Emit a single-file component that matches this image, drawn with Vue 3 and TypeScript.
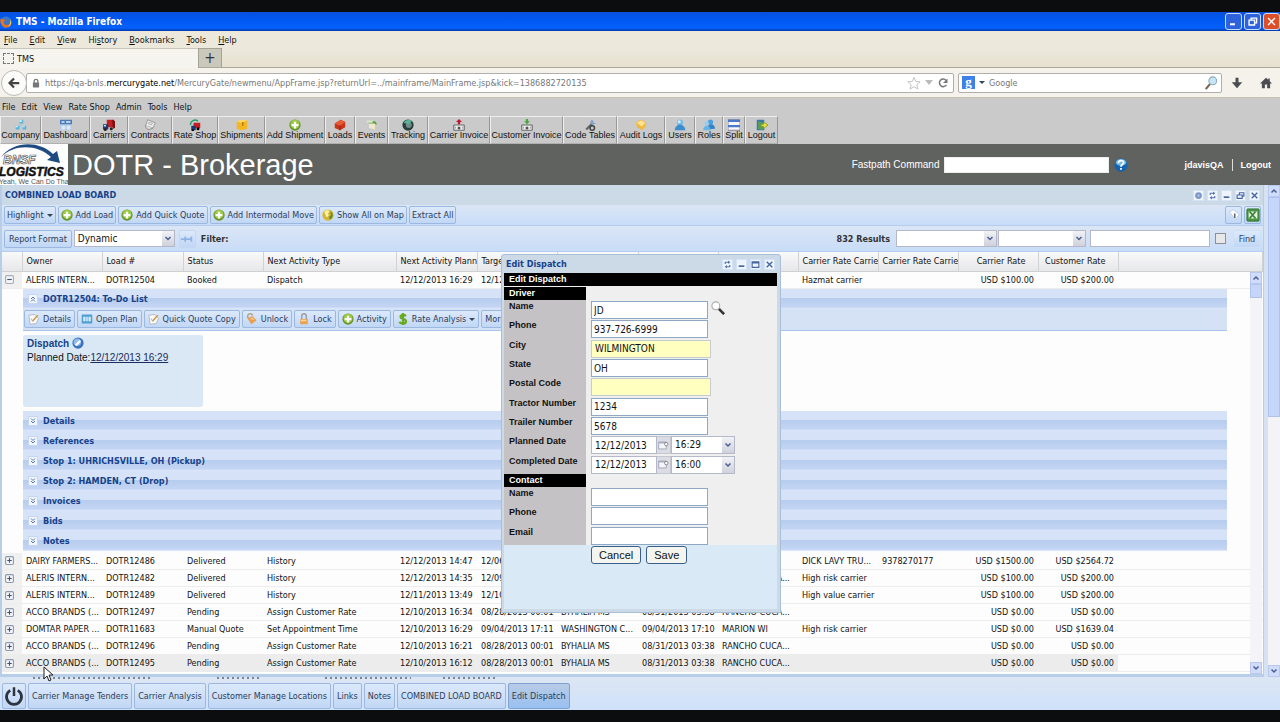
<script setup lang="ts">
import { ref } from 'vue'

type Row = string[]

const icons: Record<string, string> = {
  firefox: '<circle cx="8" cy="7" r="6.500" fill="#3f76c4"/><path d="M1 3C-1 8 2 15 8 15.500c5 0 8-4 7-9-1 3-2 4-4 5-3 1-6 0-6-3 0-2 1-2 2-3C5 4 3 5 1 3z" fill="#e8731d"/><path d="M14 4c2 4 1 9-3 11 2-3 3-7 3-11z" fill="#f9d54a"/>',
  lock: '<rect x="3" y="7" width="10" height="8" rx="1" fill="#777"/><path d="M5 8V5a3 3 0 0 1 6 0v3" fill="none" stroke="#777" stroke-width="2"/>',
  back: '<path d="M8 2 2 8l6 6M2.500 8H15" fill="none" stroke="#444" stroke-width="3"/>',
  star: '<path d="m8 1.500 2 4.700 5 .4-3.800 3.300 1.200 5L8 12.200l-4.400 2.700 1.200-5L1 6.600l5-.4z" fill="#fff" stroke="#bbb"/>',
  reload: '<path d="M12.500 10.500A5 5 0 1 1 12 4.500" fill="none" stroke="#777" stroke-width="2"/><path d="M14 2v6H8z" fill="#777"/>',
  glass: '<path d="m2 15 5-6" stroke="#7d6658" stroke-width="2.500"/><circle cx="10" cy="5.500" r="4.500" fill="#c5e6f7" stroke="#8fa9b8" stroke-width="1.200"/>',
  find: '<path d="m9 9 6 6" stroke="#333" stroke-width="3"/><circle cx="5.500" cy="5.500" r="4.500" fill="#fff" stroke="#aaa" stroke-width="1.200"/>',
  down: '<path d="M6 1h4v6h5l-7 8-7-8h5z" fill="#4a4c50"/>',
  home: '<path d="M8 1 0 8.500h2.500V15h4v-5h3v5h4V8.500H16L13 5.600V2h-2v1.800z" fill="#4a4c50"/>',
  company: '<path d="M8 5v4M3 12l5-4 5 4" stroke="#a8c4c8" fill="none"/><path d="M6 1h5v5H6zM1 9h5v5H1zM10 9h5v5h-5z" fill="#58b4dc"/><path d="M6 1h3v3H6zM1 9h3v2H1zM10 9h3v2h-3z" fill="#bff0f8"/>',
  dashboard: '<path d="M0 1h16v14H0z" fill="#b5cbe3"/><path d="M0 1h16v6H0z" fill="#4b7cb8"/><path d="M2 3h4v2H2zM8 3h6v2H8zM2 9h5v5H2zM9 9h5v5H9z" fill="#dceaf8"/>',
  truck: '<path d="M5 1h10v10H5z" fill="#c51e22"/><path d="m12 1 4 2v9l-3 1z" fill="#7d1013"/><path d="M0 7h7v7H0z" fill="#1f386f"/><path d="M1 8h3v2H1z" fill="#bfe0ff"/><circle cx="3" cy="14" r="2" fill="#222"/><circle cx="11" cy="13" r="2" fill="#222"/>',
  contract: '<path d="m5 1 10 4-3 7L2 9z" fill="#eee" stroke="#888"/><path d="m6 4 6 2M5 6l6 2" stroke="#999"/><path d="M2 9c0 3 2 5 5 5l5-2" fill="#ddd" stroke="#777"/>',
  rate: '<path d="M2 8a6 6 0 0 1 10-5" fill="none" stroke="#23a269" stroke-width="2"/><path d="M6 5h9v7H6z" fill="#c51e22"/><path d="M3 9h6v6H3z" fill="#1f386f"/><circle cx="5" cy="15" r="1.500"/><circle cx="12" cy="13" r="2"/>',
  box: '<path d="m1 3 6 1 8-2v11l-8 2-6-2z" fill="#f4b71f"/><path d="m1 3 7-2 7 1-8 3z" fill="#ffd95e"/><path d="M8 4h2v5H8z" fill="#b7771a"/>',
  add: '<circle cx="8" cy="8" r="7.500" fill="#69942a"/><circle cx="8" cy="7" r="6" fill="#9ccb45"/><path d="M8 3.500v9M3.500 8h9" stroke="#fff" stroke-width="3"/>',
  loads: '<path d="m1 6 8-5 6 3v7l-7 4-7-3z" fill="#c83519"/><path d="m1 6 8-5 6 3-7 5z" fill="#e75b35"/><path d="M8 9v6" stroke="#7d1809"/>',
  events: '<path d="M2 3h10l3 4H5z" fill="#5a9b43"/><path d="M4 6h8v8l-8-2z" fill="#eee9c9"/><path d="M1 2h8v3H1z" fill="#d6e8c3"/>',
  tracking: '<circle cx="8" cy="8" r="7.500" fill="#263f3d"/><circle cx="9" cy="8" r="4" fill="#738b88"/><path d="M2 5a7 7 0 0 1 11-2L9 7z" fill="#59b395"/>',
  invoiceUp: '<path d="M1 8h14v7H1z" fill="#eee" stroke="#444"/><path d="M8 7V3" stroke="#c11530" stroke-width="3"/><path d="m4 4 4-4 4 4z" fill="#c11530"/><circle cx="8" cy="12" r="2" fill="#555"/><path d="M3 10v3M13 10v3" stroke="#777"/>',
  invoiceDown: '<path d="M1 8h14v7H1z" fill="#eee" stroke="#444"/><path d="M8 0v4" stroke="#47a83a" stroke-width="3"/><path d="m4 3 4 4 4-4z" fill="#47a83a"/><circle cx="8" cy="12" r="2" fill="#555"/><path d="M3 10v3M13 10v3" stroke="#777"/>',
  code: '<path d="m3 14 8-8" stroke="#666" stroke-width="3"/><path d="M10 1 8 5l3 3 5-2-3-1-1-3z" fill="#84a3c9"/><circle cx="11" cy="12" r="3" fill="none" stroke="#444" stroke-width="2"/>',
  audit: '<path d="m1 5 6-4 8 3-1 6-5 5-6-4z" fill="#f0b83d"/><path d="m2 5 6-3 6 3-5 5z" fill="#ffe391"/>',
  user: '<circle cx="8" cy="4.500" r="4" fill="#70b9ea"/><path d="M1 15c0-10 14-10 14 0z" fill="#3d8ccd"/><circle cx="7" cy="3.500" r="2" fill="#d5efff"/>',
  roles: '<circle cx="10" cy="4" r="3.500" fill="#4c9ede"/><path d="M5 14c0-9 11-9 11-1z" fill="#3584c6"/><circle cx="5" cy="6" r="3" fill="#93cdf2"/><path d="M0 15c0-8 10-8 10 0z" fill="#69b4e7"/>',
  split: '<path d="M0 1h16v14H0z" fill="#f7f7f7" stroke="#668"/><path d="M0 1h16v3H0zM0 8h16v3H0z" fill="#4a79c9"/>',
  logout: '<path d="M1 1h10v14H1z" fill="#3c79a9"/><path d="m3 3 6 2v10l-6-2z" fill="#5aa14b"/><path d="m10 4 6 4-6 5v-3H7V7h3z" fill="#e4e541" stroke="#8a8e26"/>',
  help: '<circle cx="8" cy="8" r="7.500" fill="#1662ad"/><ellipse cx="8" cy="5" rx="6" ry="4" fill="#70b7e8"/><path d="M5 6c0-4 6-4 6-1 0 2-3 2-3 5M8 11.500v2" fill="none" stroke="#fff" stroke-width="2"/>',
  globe: '<circle cx="8" cy="8" r="7.500" fill="#d6b530"/><path d="M3 4c2-3 6-3 7-1L8 6l1 3-3 2z" fill="#fff4a0"/><path d="M11 3c4 2 5 8 0 11l-2-3 3-3z" fill="#5c8d39"/>',
  note: '<path d="m1 3 8-1 5 5-3 7-8 1z" fill="#fafafa" stroke="#aab"/><path d="m6 11 7-8" stroke="#d09948" stroke-width="2"/><path d="m4 7 2 4" stroke="#9aa"/>',
  plan: '<rect x="1" y="2" width="14" height="12" fill="#4f9fd3"/><path d="M3 5h3v6H3zM7 5h2v6H7zM10 5h3v6h-3z" fill="#d8f1ff"/>',
  unlock: '<path d="m2 7 7-3 5 6-7 5z" fill="#e79e4d"/><path d="M3 7C0 2 6-1 9 3" fill="none" stroke="#b1a38c" stroke-width="2"/><path d="m5 8 4-2 2 3z" fill="#ffd493"/>',
  padlock: '<path d="M3 8h10v7H3z" fill="#e8a14f"/><path d="M5 8V4a3 3 0 0 1 6 0v4" fill="none" stroke="#9b9fa8" stroke-width="2"/><path d="M4 9h7v2H4z" fill="#ffd79b"/>',
  dollar: '<path d="M12 4C8 1 4 3 5 6s7 1 7 5-6 4-9 1M8 0v16" fill="none" stroke="#69a91c" stroke-width="3"/>',
  edit: '<circle cx="8" cy="8" r="7.500" fill="#3b73bd"/><circle cx="7" cy="7" r="5" fill="#91bbed"/><path d="m5 11 6-6" stroke="#fff" stroke-width="3"/>',
  tag: '<path d="m2 4 5-3 8 6-5 7z" fill="#fff" stroke="#b9c4d5"/><path d="M9 6v6" stroke="#59657a" stroke-width="2"/>',
  excel: '<rect x="1" y="1" width="14" height="14" rx="1" fill="#4a9444" stroke="#2f7434"/><path d="M3 4h10v8H3z" fill="#e5f4de"/><path d="m4 4 7 8M11 4l-7 8" stroke="#398438" stroke-width="2"/>',
  pin: '<path d="M1 8h5M6 5v6M6 8h7M13 5v6" stroke="#8fb2e4" stroke-width="2"/>',
  gear: '<circle cx="8" cy="8" r="6" fill="#7f98c5"/><circle cx="8" cy="8" r="2" fill="#b9c9e6"/>',
  refresh: '<path d="M4 7V4h7M12 9v3H5" fill="none" stroke="#5572ab" stroke-width="2"/><path d="m9 1 4 3-4 3zM7 9l-4 3 4 3z" fill="#5572ab"/>',
  min: '<path d="M3 11h10" stroke="#48659f" stroke-width="3"/>',
  restore: '<path d="M6 7V3h8v6h-3M2 7h9v6H2z" fill="none" stroke="#48659f" stroke-width="2"/>',
  max: '<path d="M2 3h12v10H2zM2 5h12" fill="none" stroke="#48659f" stroke-width="2"/>',
  close: '<path d="m3 3 10 10M13 3 3 13" stroke="#48659f" stroke-width="2.500"/>',
  chevUp: '<path d="m4 8 4-4 4 4M4 13l4-4 4 4" fill="none" stroke="#5878a8" stroke-width="2"/>',
  chevDown: '<path d="m4 3 4 4 4-4M4 8l4 4 4-4" fill="none" stroke="#5878a8" stroke-width="2"/>',
  plus: '<rect x="1" y="1" width="14" height="14" rx="2" fill="#f3f5f8" stroke="#8c9bb0" stroke-width="2"/><path d="M8 4v8M4 8h8" stroke="#43546d" stroke-width="2"/>',
  minus: '<rect x="1" y="1" width="14" height="14" rx="2" fill="#f3f5f8" stroke="#a5aebb" stroke-width="2"/><path d="M4 8h8" stroke="#43546d" stroke-width="2"/>',
  up: '<path d="m3 11 5-5 5 5" fill="none" stroke="#4a5e93" stroke-width="3"/>',
  arrow: '<path d="m3 5 5 5 5-5" fill="none" stroke="#4a5e93" stroke-width="3"/>',
  calendar: '<path d="M1 3h11v10H1z" fill="#f5f5fa" stroke="#8b91a5"/><path d="M1 3h11v2H1z" fill="#a3aabd"/><circle cx="12" cy="6" r="2.500" fill="#fff" stroke="#666"/>',
  power: '<path d="M5 3.500a6 6 0 1 0 6 0" fill="none" stroke="#2b3440" stroke-width="2.200"/><path d="M8 1v7" stroke="#2b3440" stroke-width="2"/>',
}

const browserMenu = ['File', 'Edit', 'View', 'History', 'Bookmarks', 'Tools', 'Help']
const underlined = [0, 0, 0, 2, 0, 0, 0]
const appMenu = ['File', 'Edit', 'View', 'Rate Shop', 'Admin', 'Tools', 'Help']
const modules = [
  ['Company', 'company'], ['Dashboard', 'dashboard'], ['Carriers', 'truck'], ['Contracts', 'contract'],
  ['Rate Shop', 'rate'], ['Shipments', 'box'], ['Add Shipment', 'add'], ['Loads', 'loads'],
  ['Events', 'events'], ['Tracking', 'tracking'], ['Carrier Invoice', 'invoiceUp'],
  ['Customer Invoice', 'invoiceDown'], ['Code Tables', 'code'], ['Audit Logs', 'audit'],
  ['Users', 'user'], ['Roles', 'roles'], ['Split', 'split'], ['Logout', 'logout'],
]
const boardActions = [
  ['Highlight', '', 'menu'], ['Add Load', 'add', ''], ['Add Quick Quote', 'add', ''],
  ['Add Intermodal Move', 'add', ''], ['Show All on Map', 'globe', ''], ['Extract All', '', ''],
]
const loadActions = [
  ['Details', 'note', ''], ['Open Plan', 'plan', ''], ['Quick Quote Copy', 'note', ''], ['Unlock', 'unlock', ''],
  ['Lock', 'padlock', ''], ['Activity', 'add', ''], ['Rate Analysis', 'dollar', 'menu'], ['More Actions', '', 'menu'],
]
const sections = ['Details', 'References', 'Stop 1: UHRICHSVILLE, OH (Pickup)', 'Stop 2: HAMDEN, CT (Drop)', 'Invoices', 'Bids', 'Notes']
const columns = ['Owner', 'Load #', 'Status', 'Next Activity Type', 'Next Activity Planned', 'Target', '', '', '', 'Carrier Rate Carrier', 'Carrier Rate Carrier', 'Carrier Rate', 'Customer Rate', '']
const first: Row = ['ALERIS INTERN...', 'DOTR12504', 'Booked', 'Dispatch', '12/12/2013 16:29', '12/12', '', '', '', 'Hazmat carrier', '', 'USD $100.00', 'USD $200.00', '']
const rows: Row[] = [
  ['DAIRY FARMERS...', 'DOTR12486', 'Delivered', 'History', '12/12/2013 14:47', '12/06', '', '', '', 'DICK LAVY TRU...', '9378270177', 'USD $1500.00', 'USD $2564.72', ''],
  ['ALERIS INTERN...', 'DOTR12482', 'Delivered', 'History', '12/12/2013 14:35', '12/09', '', '', 'RANCHO CUCA...', 'High risk carrier', '', 'USD $100.00', 'USD $200.00', ''],
  ['ALERIS INTERN...', 'DOTR12489', 'Delivered', 'History', '12/11/2013 13:49', '12/10', '', '', '', 'High value carrier', '', 'USD $100.00', 'USD $200.00', ''],
  ['ACCO BRANDS (...', 'DOTR12497', 'Pending', 'Assign Customer Rate', '12/10/2013 16:34', '08/28/2013 00:01', 'BYHALIA MS', '08/31/2013 03:38', 'RANCHO CUCA...', '', '', 'USD $0.00', 'USD $0.00', ''],
  ['DOMTAR PAPER ...', 'DOTR11683', 'Manual Quote', 'Set Appointment Time', '12/10/2013 16:29', '09/04/2013 17:11', 'WASHINGTON C...', '09/04/2013 17:10', 'MARION WI', 'High risk carrier', '', 'USD $0.00', 'USD $1639.04', ''],
  ['ACCO BRANDS (...', 'DOTR12496', 'Pending', 'Assign Customer Rate', '12/10/2013 16:21', '08/28/2013 00:01', 'BYHALIA MS', '08/31/2013 03:38', 'RANCHO CUCA...', '', '', 'USD $0.00', 'USD $0.00', ''],
  ['ACCO BRANDS (...', 'DOTR12495', 'Pending', 'Assign Customer Rate', '12/10/2013 16:12', '08/28/2013 00:01', 'BYHALIA MS', '08/31/2013 03:38', 'RANCHO CUCA...', '', '', 'USD $0.00', 'USD $0.00', ''],
]
const taskbar = ['Carrier Manage Tenders', 'Carrier Analysis', 'Customer Manage Locations', 'Links', 'Notes', 'COMBINED LOAD BOARD', 'Edit Dispatch']

const driver = ref([
  { id: 'd-name', label: 'Name', value: 'JD', hint: false },
  { id: 'd-phone', label: 'Phone', value: '937-726-6999', hint: false },
  { id: 'd-city', label: 'City', value: 'WILMINGTON', hint: true },
  { id: 'd-state', label: 'State', value: 'OH', hint: false },
  { id: 'd-zip', label: 'Postal Code', value: '', hint: true },
  { id: 'd-tractor', label: 'Tractor Number', value: '1234', hint: false },
  { id: 'd-trailer', label: 'Trailer Number', value: '5678', hint: false },
])
const dates = ref([
  { id: 'planned', label: 'Planned Date', day: '12/12/2013', time: '16:29' },
  { id: 'completed', label: 'Completed Date', day: '12/12/2013', time: '16:00' },
])
const contact = ref([
  { id: 'c-name', label: 'Name', value: '' },
  { id: 'c-phone', label: 'Phone', value: '' },
  { id: 'c-email', label: 'Email', value: '' },
])
</script>

<template>
  <div class="screen">
    <header class="titlebar">
      <svg class="i12" viewBox="0 0 16 16" v-html="icons.firefox" />
      <h1>TMS - Mozilla Firefox</h1>
      <div class="winbtns">
        <button aria-label="Minimize"><svg viewBox="0 0 16 16"><path d="M3 12h7" stroke="#fff" stroke-width="3" /></svg></button>
        <button aria-label="Restore"><svg viewBox="0 0 16 16"><path d="M6 6V3h8v7h-3M3 6h8v7H3z" fill="none" stroke="#fff" stroke-width="2" /></svg></button>
        <button aria-label="Close" class="x"><svg viewBox="0 0 16 16"><path d="m3 3 10 10M13 3 3 13" stroke="#fff" stroke-width="2" /></svg></button>
      </div>
    </header>

    <div class="chrome">
      <nav class="fxmenu">
        <button v-for="(m, i) in browserMenu" :key="m">{{ m.slice(0, underlined[i]) }}<u>{{ m[underlined[i]] }}</u>{{ m.slice(underlined[i] + 1) }}</button>
      </nav>
      <div class="tabs">
        <button class="tab"><span class="blank"></span>TMS</button>
        <button class="newtab" aria-label="New tab">+</button>
      </div>
      <div class="nav">
        <button class="back" aria-label="Back"><svg class="i12" viewBox="0 0 16 16" v-html="icons.back" /></button>
        <div class="url">
          <svg class="i10" viewBox="0 0 16 16" v-html="icons.lock" />
          <span class="addr">https://qa-bnls.<b>mercurygate.net</b>/MercuryGate/newmenu/AppFrame.jsp?returnUrl=../mainframe/MainFrame.jsp&amp;kick=1386882720135</span>
          <svg class="i14" viewBox="0 0 16 16" v-html="icons.star" />
          <span class="tri pale"></span>
          <svg class="i12" viewBox="0 0 16 16" v-html="icons.reload" />
        </div>
        <div class="search">
          <span class="g">g</span><span class="tri"></span>
          <input aria-label="Search" placeholder="Google">
          <svg class="i14" viewBox="0 0 16 16" v-html="icons.glass" />
        </div>
        <button class="plain" aria-label="Downloads"><svg class="i12" viewBox="0 0 16 16" v-html="icons.down" /></button>
        <button class="plain" aria-label="Home"><svg class="i12" viewBox="0 0 16 16" v-html="icons.home" /></button>
      </div>
    </div>

    <nav class="appmenu"><button v-for="m in appMenu" :key="m">{{ m }}</button></nav>
    <div class="modules">
      <button v-for="m in modules" :key="m[0]"><svg class="i12" viewBox="0 0 16 16" v-html="icons[m[1]]" /><span>{{ m[0] }}</span></button>
    </div>

    <div class="banner">
      <svg class="logo" viewBox="0 0 68 41">
        <rect width="68" height="41" fill="#fdfdfd" />
        <path d="M1 13C13-3 39-4 53 10l4-3 3 12-13-3 4-3C37 0 14 0 1 13z" fill="#1e4b82" />
        <text x="3" y="20" font-family="Liberation Sans" font-size="12" font-style="italic" font-weight="700" fill="#fff" stroke="#555" stroke-width=".7">BNSF</text>
        <text x="-1" y="32" font-family="Liberation Sans" font-size="12" font-style="italic" font-weight="700" fill="#111" stroke="#111" stroke-width=".5">LOGISTICS</text>
        <text x="-1" y="40" font-family="Liberation Sans" font-size="7" fill="#555">Yeah, We Can Do That</text>
      </svg>
      <h2>DOTR - Brokerage</h2>
      <label for="fast">Fastpath Command</label>
      <input id="fast">
      <svg class="i14 help" viewBox="0 0 16 16" v-html="icons.help" />
      <div class="user"><b>jdavisQA</b><a href="#">Logout</a></div>
    </div>

    <div class="work">
      <main class="board">
        <div class="ptitle">
          <h3>COMBINED LOAD BOARD</h3>
          <div class="tools"><button v-for="t in ['gear', 'refresh', 'min', 'restore', 'close']" :key="t" :aria-label="t"><svg viewBox="0 0 16 16" v-html="icons[t]" /></button></div>
        </div>
        <div class="bar top">
          <button v-for="a in boardActions" :key="a[0]" class="btn"><svg v-if="a[1]" class="i12" viewBox="0 0 16 16" v-html="icons[a[1]]" />{{ a[0] }}<span v-if="a[2]" class="tri"></span></button>
          <span class="grow"></span>
          <button class="btn sq" aria-label="Tags"><svg class="i12" viewBox="0 0 16 16" v-html="icons.tag" /></button>
          <button class="btn sq" aria-label="Export to Excel"><svg class="i14" viewBox="0 0 16 16" v-html="icons.excel" /></button>
        </div>
        <div class="bar filter">
          <button class="btn">Report Format</button>
          <span class="combo w100"><select aria-label="Report Format"><option>Dynamic</option></select><svg viewBox="0 0 16 16" v-html="icons.arrow" /></span>
          <button class="btn sq pin" aria-label="Pin"><svg class="i14" viewBox="0 0 16 16" v-html="icons.pin" /></button>
          <b>Filter:</b>
          <span class="grow"></span>
          <b class="results">832 Results</b>
          <span class="combo w100"><select aria-label="Filter field"><option></option></select><svg viewBox="0 0 16 16" v-html="icons.arrow" /></span>
          <span class="combo w88"><select aria-label="Filter condition"><option></option></select><svg viewBox="0 0 16 16" v-html="icons.arrow" /></span>
          <input class="q" aria-label="Filter value">
          <input type="checkbox" aria-label="Use filter">
          <button class="btn find">Find</button>
        </div>

        <div class="gridwrap">
          <table>
            <colgroup><col class="c0"><col v-for="(c, i) in columns" :key="i" :class="'c' + (i + 1)"></colgroup>
            <thead>
              <tr><th></th><th v-for="(c, i) in columns" :key="i" :class="{ num: i === 11 || i === 12 }">{{ c }}</th></tr>
            </thead>
            <tbody>
              <tr class="open">
                <td class="exp"><button aria-label="Collapse"><svg viewBox="0 0 16 16" v-html="icons.minus" /></button></td>
                <td v-for="(c, i) in first" :key="i" :class="{ num: i === 11 || i === 12 }">{{ c }}</td>
              </tr>
              <tr class="detail">
                <td></td>
                <td colspan="14">
                  <div class="sec"><button aria-label="Collapse"><svg viewBox="0 0 16 16" v-html="icons.chevUp" /></button>DOTR12504: To-Do List</div>
                  <div class="bar sub">
                    <button v-for="a in loadActions" :key="a[0]" class="btn"><svg v-if="a[1]" class="i12" viewBox="0 0 16 16" v-html="icons[a[1]]" />{{ a[0] }}<span v-if="a[2]" class="tri"></span></button>
                  </div>
                  <div class="todo">
                    <div class="card">
                      <h4>Dispatch <svg class="i12" viewBox="0 0 16 16" v-html="icons.edit" /></h4>
                      <p>Planned Date:<a href="#">12/12/2013 16:29</a></p>
                    </div>
                  </div>
                  <div v-for="s in sections" :key="s" class="sec"><button :aria-label="'Expand ' + s"><svg viewBox="0 0 16 16" v-html="icons.chevDown" /></button>{{ s }}</div>
                </td>
              </tr>
              <tr v-for="r in rows" :key="r[1]">
                <td class="exp"><button aria-label="Expand"><svg viewBox="0 0 16 16" v-html="icons.plus" /></button></td>
                <td v-for="(c, i) in r" :key="i" :class="{ num: i === 11 || i === 12 }">{{ c }}</td>
              </tr>
            </tbody>
          </table>
          <div class="scroll inner">
            <button aria-label="Scroll up"><svg viewBox="0 0 16 16" v-html="icons.up" /></button>
            <span class="thumb"></span><span class="grow"></span>
            <button aria-label="Scroll down"><svg viewBox="0 0 16 16" v-html="icons.arrow" /></button>
          </div>
        </div>
      </main>
      <div class="scroll outer">
        <button aria-label="Page up"><svg viewBox="0 0 16 16" v-html="icons.up" /></button>
        <span class="thumb"></span><span class="grow"></span>
        <button aria-label="Page down"><svg viewBox="0 0 16 16" v-html="icons.arrow" /></button>
      </div>
    </div>
    <div class="remnant"><i></i><i></i><i></i><i></i></div>

    <footer class="tasks">
      <button class="btn pow" aria-label="Start"><svg viewBox="0 0 16 16" v-html="icons.power" /></button>
      <button v-for="t in taskbar" :key="t" class="btn" :class="{ active: t === 'Edit Dispatch' }">{{ t }}</button>
    </footer>

    <section class="dialog" role="dialog" aria-label="Edit Dispatch">
      <div class="ptitle">
        <h3>Edit Dispatch</h3>
        <div class="tools"><button v-for="t in ['refresh', 'min', 'max', 'close']" :key="t" :aria-label="t"><svg viewBox="0 0 16 16" v-html="icons[t]" /></button></div>
      </div>
      <form @submit.prevent>
        <div class="head">Edit Dispatch</div>
        <div class="fields">
          <div class="group">Driver</div>
          <div class="rows nine">
            <div v-for="f in driver" :key="f.id" class="row">
              <label :for="f.id">{{ f.label }}</label>
              <input :id="f.id" v-model="f.value" :class="{ hint: f.hint }">
              <svg v-if="f.id === 'd-name'" class="i14" viewBox="0 0 16 16" v-html="icons.find" />
            </div>
            <div v-for="d in dates" :key="d.id" class="row">
              <label :for="d.id">{{ d.label }}</label>
              <span class="date"><input :id="d.id" v-model="d.day"><button type="button" aria-label="Pick date"><svg viewBox="0 0 16 16" v-html="icons.calendar" /></button></span>
              <span class="combo w64"><select :aria-label="d.label + ' time'"><option>{{ d.time }}</option></select><svg viewBox="0 0 16 16" v-html="icons.arrow" /></span>
            </div>
          </div>
          <div class="group">Contact</div>
          <div class="rows three">
            <div v-for="f in contact" :key="f.id" class="row">
              <label :for="f.id">{{ f.label }}</label>
              <input :id="f.id" v-model="f.value">
            </div>
          </div>
        </div>
        <div class="actions"><button type="button">Cancel</button><button>Save</button></div>
      </form>
    </section>

    <svg class="cursor" viewBox="0 0 10 16"><path d="M1 1v12l3-3 2 5 2-1-2-5h4z" fill="#fff" stroke="#222" /></svg>
  </div>
</template>

<style>
body { margin: 0; background: #0b0d0f; }
</style>

<style scoped>
* { box-sizing: border-box; }
.screen {
  position: relative; display: flex; flex-direction: column; height: 100vh; padding: 12px 0; overflow: hidden;
  background: #0b0d0f; color: #111; font: 9px/12px "DejaVu Sans Condensed", "Open Sans", sans-serif;
}
button, input, select { font: inherit; color: inherit; margin: 0; padding: 0; border-radius: 0; }
button { border: 0; background: none; white-space: nowrap; }
h1, h2, h3, h4, p { margin: 0; font-size: inherit; }
svg { display: block; flex: none; }
.i10 { width: 10px; height: 10px; }
.i12 { width: 12px; height: 12px; }
.i14 { width: 14px; height: 14px; }
.grow { flex: 1; }
.tri { width: 0; border: 3px solid transparent; border-top-color: #345; border-bottom: 0; }
.pale { border-width: 5px 4px 0; border-top-color: #bbb; }

.titlebar { flex: none; display: flex; align-items: center; gap: 4px; height: 19px; color: #fff; background: linear-gradient(#0a50dc, #0058f0 40%, #0660fc 85%, #0038a8); }
.titlebar h1 { flex: 1; font-size: 10px; }
.winbtns { display: flex; gap: 2px; }
.winbtns button { width: 17px; height: 17px; padding: 2px; border: 1px solid #c8dcff; border-radius: 3px; background: #2d62dc; }
.winbtns .x { background: #dc4f28; }

.chrome { flex: none; background: #ece9dc; border-bottom: 1px solid #c4c4b0; }
.fxmenu { display: flex; gap: 12px; height: 17px; padding-left: 4px; }
.tabs { display: flex; height: 20px; background: linear-gradient(#ece9dc, #e6e0cf); border-bottom: 1px solid #aaa898; }
.tab { display: flex; align-items: center; gap: 3px; width: 198px; height: 20px; padding-left: 3px; background: #f6f4ee; border-top: 1px solid #c8c6ba; }
.blank { width: 11px; height: 11px; border: 1px dashed #777; }
.newtab { width: 24px; background: #c9c8bb; border: 1px solid #a5a396; border-bottom: 0; font-size: 15px; line-height: 16px; color: #333; }
.nav { display: flex; align-items: center; height: 29px; padding: 0 6px 0 1px; background: #f4f2eb; }
.back { z-index: 1; display: grid; place-items: center; width: 26px; height: 26px; margin-right: -1px; border: 1px solid #bbb; border-radius: 50%; background: #fbfbf9; }
.url, .search { display: flex; align-items: center; height: 20px; background: #fff; border: 1px solid #b0aeaa; border-radius: 2px; }
.url { flex: 1; gap: 4px; padding: 0 4px; margin-right: 4px; }
.addr { flex: 1; color: #777; white-space: nowrap; overflow: hidden; }
.addr b { font-weight: 400; color: #000; }
.search { width: 264px; gap: 4px; padding: 0 3px; margin-right: 9px; }
.search input { flex: 1; min-width: 0; border: 0; background: none; outline: 0; }
.search input::placeholder { color: #777; opacity: 1; }
.g { width: 13px; height: 13px; background: #3f7fe8; color: #fff; font: bold 13px/11px "Liberation Serif", serif; text-align: center; }
.plain { width: 14px; margin-right: 15px; }
.plain:last-child { margin-right: 0; }

.appmenu { flex: none; display: flex; gap: 6px; height: 18px; padding: 0 2px; background: #cacaca; }
.modules { flex: none; display: grid; grid-template-columns: 41px 49px 38px 44px 46px 47px 60px 30px 33px 40px 62px 73px 54px 48px 30px 28px 22px 33px; height: 28px; background: #cacaca; font-family: "Liberation Sans", Arial, sans-serif; }
.modules button { display: flex; flex-direction: column; align-items: center; padding-top: 2px; border: solid; border-width: 1px; border-color: #eee #989898 #b0b0b0 #eee; }
.modules span { margin-top: -2px; }

.banner { flex: none; display: flex; align-items: center; height: 41px; background: #5f625f; color: #fff; font: 10px/12px "Liberation Sans", Arial, sans-serif; }
.logo { width: 68px; height: 41px; overflow: hidden; }
.banner h2 { flex: 1; margin-left: 4px; font-size: 29px; line-height: 36px; font-weight: 400; }
.banner input { width: 165px; height: 16px; margin: 0 5px; border: 1px solid #eee; background: #fff; color: #111; }
.user { display: flex; align-items: center; margin: 0 9px 0 56px; font-size: 9px; font-weight: 700; }
.user a { margin-left: 8px; padding-left: 8px; border-left: 1px solid #ddd; color: #fff; text-decoration: none; }

.work { flex: 1; min-height: 0; display: flex; background: #d6e2f2; }
.board { flex: 1; min-width: 0; display: flex; flex-direction: column; border: solid #b8cde8; border-width: 0 1px 3px 2px; background: #fdfdfd; margin-right: 4px; }
.ptitle { flex: none; display: flex; align-items: center; justify-content: space-between; height: 20px; padding: 0 3px; background: #ccdae8; color: #15428b; }
.tools { display: flex; gap: 3px; }
.tools button { width: 11px; height: 11px; border: 1px solid #d4e4f8; background: #eef5ff; }
.bar { flex: none; display: flex; align-items: center; gap: 2px; height: 21px; padding: 0 2px; background: linear-gradient(#dbe6f5, #c8dcf8); border-bottom: 1px solid #b4cdf0; color: #333; }
.btn { display: flex; align-items: center; justify-content: center; gap: 3px; height: 18px; padding: 0 3px; border: 1px solid #9ab8e0; border-radius: 2px; background: linear-gradient(#dce9fb, #c1d7f5); color: #2c3c58; }
.top .btn { padding: 0 2px; }
.top .sq, .sq { width: 17px; padding: 0; }
.filter { height: 26px; }
.filter .btn { padding: 0 4px; }
.filter .pin { padding: 0; border-color: #c4d8f4; margin: 0 3px 0 2px; }
.combo { position: relative; display: block; height: 17px; font-size: 10px; }
.combo select { width: 100%; height: 100%; padding: 0 3px; appearance: none; border: 1px solid #b5b8c8; background: #fff; outline: 0; color: #111; }
.combo svg { position: absolute; top: 1px; right: 1px; width: 12px; height: 15px; padding: 2px; background: linear-gradient(#f2f2f6, #cfd2dc); pointer-events: none; }
.w100 { width: 101px; }
.w88 { width: 88px; margin-left: -1px; }
.w64 { width: 64px; }
.results { margin-right: 4px; }
.q { width: 120px; height: 17px; margin: 0 3px 0 2px; border: 1px solid #b5b8c8; background: #fff; }
.filter input[type="checkbox"] { appearance: none; width: 11px; height: 11px; border: 1px solid #8c9096; background: #e8e8e8; }
.find { width: 28px; margin-left: 5px; border-color: #cfe0f6; }

.gridwrap { flex: 1; min-height: 0; position: relative; overflow: hidden; }
table { width: 100%; table-layout: fixed; border-collapse: collapse; }
th, td { height: 17px; padding: 0 2px 0 4px; text-align: left; font-weight: 400; white-space: nowrap; overflow: hidden; }
th { height: 19px; padding-right: 0; background: linear-gradient(#f9f9f9, #e6e7ea); border-right: 1px solid #d2d2d4; border-bottom: 1px solid #d0d0d0; }
td.num { text-align: right; padding-right: 4px; }
th.num { text-align: right; padding-right: 12px; }
tbody tr { border-bottom: 1px solid #ededed; }
tbody tr:last-child td:not(:last-child) { background: #ececec; }
.c0 { width: 20px; } .c1, .c3, .c6, .c8, .c9, .c10, .c11, .c12, .c13 { width: 80px; }
.c2, .c5, .c7 { width: 81px; } .c4 { width: 133px; }
.exp { padding: 0 0 0 3px; background: #f0f0f0; }
.exp button, .exp svg { display: block; width: 9px; height: 9px; }
tbody .detail { border: 0; }
.detail td { padding: 0 36px 2px 1px; vertical-align: top; }
.sec { display: flex; align-items: center; gap: 5px; height: 20px; padding-left: 5px; color: #15428b; font-weight: 700; background: linear-gradient(#d6e2f8 0 45%, #b6ccee 45%, #c4d5f4 90%, #e2e9fa); }
.sec button { width: 10px; height: 10px; border: 1px solid #c4d6f0; background: #f2f7ff; }
.sub { height: 22px; padding: 0 1px; background: #d5e1f4; border-color: #a8c4ee; }
.todo { height: 80px; padding-top: 4px; }
.card { width: 180px; height: 72px; padding: 2px 4px; border-radius: 3px; background: #d9e8f4; font: 10px/14px "Liberation Sans", Arial, sans-serif; }
.card h4 { display: flex; gap: 3px; color: #15428b; }
.card a { color: #1b2b60; }

.scroll { display: flex; flex-direction: column; width: 12px; background: #f4f4f8; }
.scroll button { height: 12px; padding: 1px; border: 1px solid #b8c8f0; background: #d0dcfa; }
.inner { position: absolute; top: 20px; right: 1px; bottom: 0; }
.inner .thumb { height: 14px; background: #c6d5f8; border: 1px solid #b0c2ee; }
.outer .thumb { height: 220px; background: #c6d5fa; border: 1px solid #b0c2ee; }
.remnant { flex: none; display: flex; gap: 64px; height: 4px; padding: 0 33px; background: #dbe6f5; }
.remnant i { width: 120px; height: 2px; background: repeating-linear-gradient(90deg, #7d8490 0 2px, transparent 2px 5px); }
.remnant i:nth-child(2) { width: 44px; }
.remnant i:nth-child(3) { width: 86px; }
.remnant i:nth-child(4) { width: 52px; margin-left: -32px; }

.tasks { flex: none; display: flex; align-items: center; gap: 2px; height: 29px; padding: 0 2px; background: linear-gradient(#dbe5f4, #cfe2fa); }
.tasks .btn { height: 26px; }
.tasks .pow { width: 24px; padding: 0; }
.pow svg { width: 20px; height: 20px; }
.tasks .active { background: linear-gradient(#b8cbe6, #98c0f0); border-color: #7fa2d0; }

.dialog { position: absolute; left: 501px; top: 254px; width: 280px; height: 359px; padding: 0 3px 3px 2px; display: flex; flex-direction: column; border: 1px solid #a9bfd8; border-radius: 3px 3px 0 0; background: #ccdae8; }
.dialog .ptitle { height: 18px; padding: 0 2px; }
form { flex: 1; display: flex; flex-direction: column; background: #d9e9f5; }
.head, .group { height: 13px; padding-left: 5px; background: #000; color: #fff; }
.head, .fields { font: bold 9px/13px "Liberation Sans", Arial, sans-serif; }
.fields { border-top: 1px solid #efefef; background: #efefef; }
.group { width: 82px; }
.rows { display: grid; grid-auto-rows: 1fr; background: linear-gradient(90deg, #c5c2c5 82px, #efefef 82px); }
.nine { height: 174px; }
.three { height: 58px; }
.row { display: flex; }
.row label { width: 87px; padding-left: 5px; }
.row input { width: 117px; height: 18px; margin-top: 1px; padding: 0 2px; border: 1px solid #8fa8c4; background: #fff; outline: 0; font: 10px/14px "DejaVu Sans Condensed", "Open Sans", sans-serif; }
.row .hint { width: 120px; padding-left: 3px; background: #ffffc0; border-color: #c5cdd0; }
.row .i14 { margin: 1px 0 0 3px; }
.date { display: flex; width: 80px; height: 18px; margin-top: 1px; }
.row .date input { flex: 1; min-width: 0; margin: 0; border-color: #b5b8c8; padding: 0 3px; }
.date button { width: 14px; padding: 2px 1px; background: #dcdde4; border: 1px solid #c5c7d0; border-left: 0; }
.row .combo { height: 18px; margin-top: 1px; font: 10px/14px "DejaVu Sans Condensed", "Open Sans", sans-serif; }
.row .combo svg { height: 16px; }
.actions { display: flex; gap: 5px; padding: 1px 0 0 87px; font: 11px/14px "Liberation Sans", Arial, sans-serif; }
.actions button { height: 18px; padding: 0 7px; border: 1px solid #3a5f8a; border-radius: 3px; background: #f5f5f0; }

.cursor { position: absolute; left: 43px; top: 666px; width: 10px; height: 16px; }
</style>
